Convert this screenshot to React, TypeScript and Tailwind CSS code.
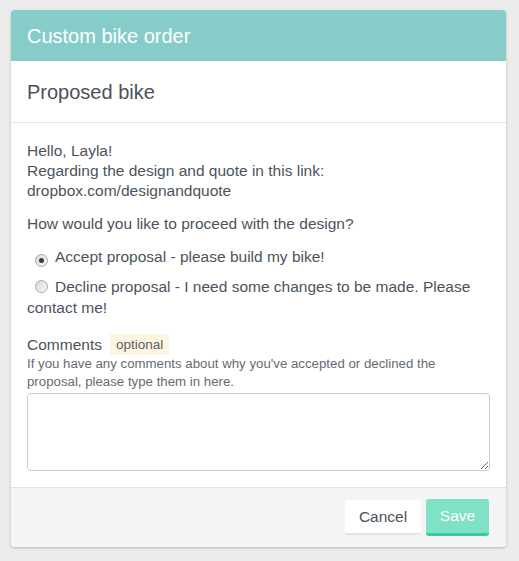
import { useState } from "react";

function Radio({ checked }: { checked: boolean }) {
  return (
    <span className="inline-flex items-center justify-center w-[13px] h-[13px] rounded-full border border-[#a8a8a8] bg-gradient-to-br from-[#d9d9d9] to-[#f7f7f7] align-[-1px] ml-2 mr-[7px]">
      {checked && <span className="w-[5px] h-[5px] rounded-full bg-[#3a3a3a]" />}
    </span>
  );
}

export default function App() {
  const [choice, setChoice] = useState<"accept" | "decline">("accept");

  return (
    <div
      className="min-h-[561px] bg-[#ececec] pt-[10px] pl-[11px]"
      style={{ fontFamily: '"Liberation Sans", Arial, sans-serif' }}
    >
      <div className="w-[495px] bg-white rounded-[4px] overflow-hidden shadow-[0_1px_3px_rgba(0,0,0,0.22)]">
        <div className="h-[51px] bg-[#86cdca] flex items-center px-4">
          <h1 className="text-[20px] text-white leading-none">Custom bike order</h1>
        </div>

        <div className="h-[62px] border-b border-[#e6e6e6] flex items-center px-4">
          <h2 className="text-[20px] text-[#4a515b] leading-none">Proposed bike</h2>
        </div>

        <div className="px-4 pt-[18px] pb-4 text-[15.5px] leading-[20px] text-[#4c535c]">
          <p>Hello, Layla!</p>
          <p>Regarding the design and quote in this link:</p>
          <p>dropbox.com/designandquote</p>

          <p className="mt-[13px]">How would you like to proceed with the design?</p>

          <label className="block mt-[13px] cursor-pointer" onClick={() => setChoice("accept")}>
            <Radio checked={choice === "accept"} />
            Accept proposal - please build my bike!
          </label>
          <label
            className="block mt-[9px] leading-[21px] cursor-pointer"
            onClick={() => setChoice("decline")}
          >
            <Radio checked={choice === "decline"} />
            Decline proposal - I need some changes to be made. Please contact me!
          </label>

          <div className="mt-[16px] flex items-center gap-2">
            <span>Comments</span>
            <span className="bg-[#fdf5e1] text-[13.5px] text-[#5a5f66] px-[6px] leading-[21px]">
              optional
            </span>
          </div>
          <p className="text-[13.25px] leading-[17.5px] text-[#666b72]">
            If you have any comments about why you've accepted or declined the proposal, please type
            them in here.
          </p>
          <textarea className="mt-[3px] block w-full h-[78px] border border-[#cccccc] rounded-[4px] outline-none p-2 text-[15px]" />
        </div>

        <div className="h-[60px] bg-[#f4f4f4] border-t border-[#e2e2e2] flex items-center justify-end gap-[5px] px-[17px]">
          <button className="w-[76px] h-[35px] bg-white rounded-[3px] border-b-2 border-[#e4e4e4] text-[15.5px] text-[#4c535c]">
            Cancel
          </button>
          <button className="w-[63px] h-[37px] bg-[#7fe1c5] rounded-[3px] border-b-[3px] border-[#3dc99c] text-[15.5px] text-white">
            Save
          </button>
        </div>
      </div>
    </div>
  );
}
